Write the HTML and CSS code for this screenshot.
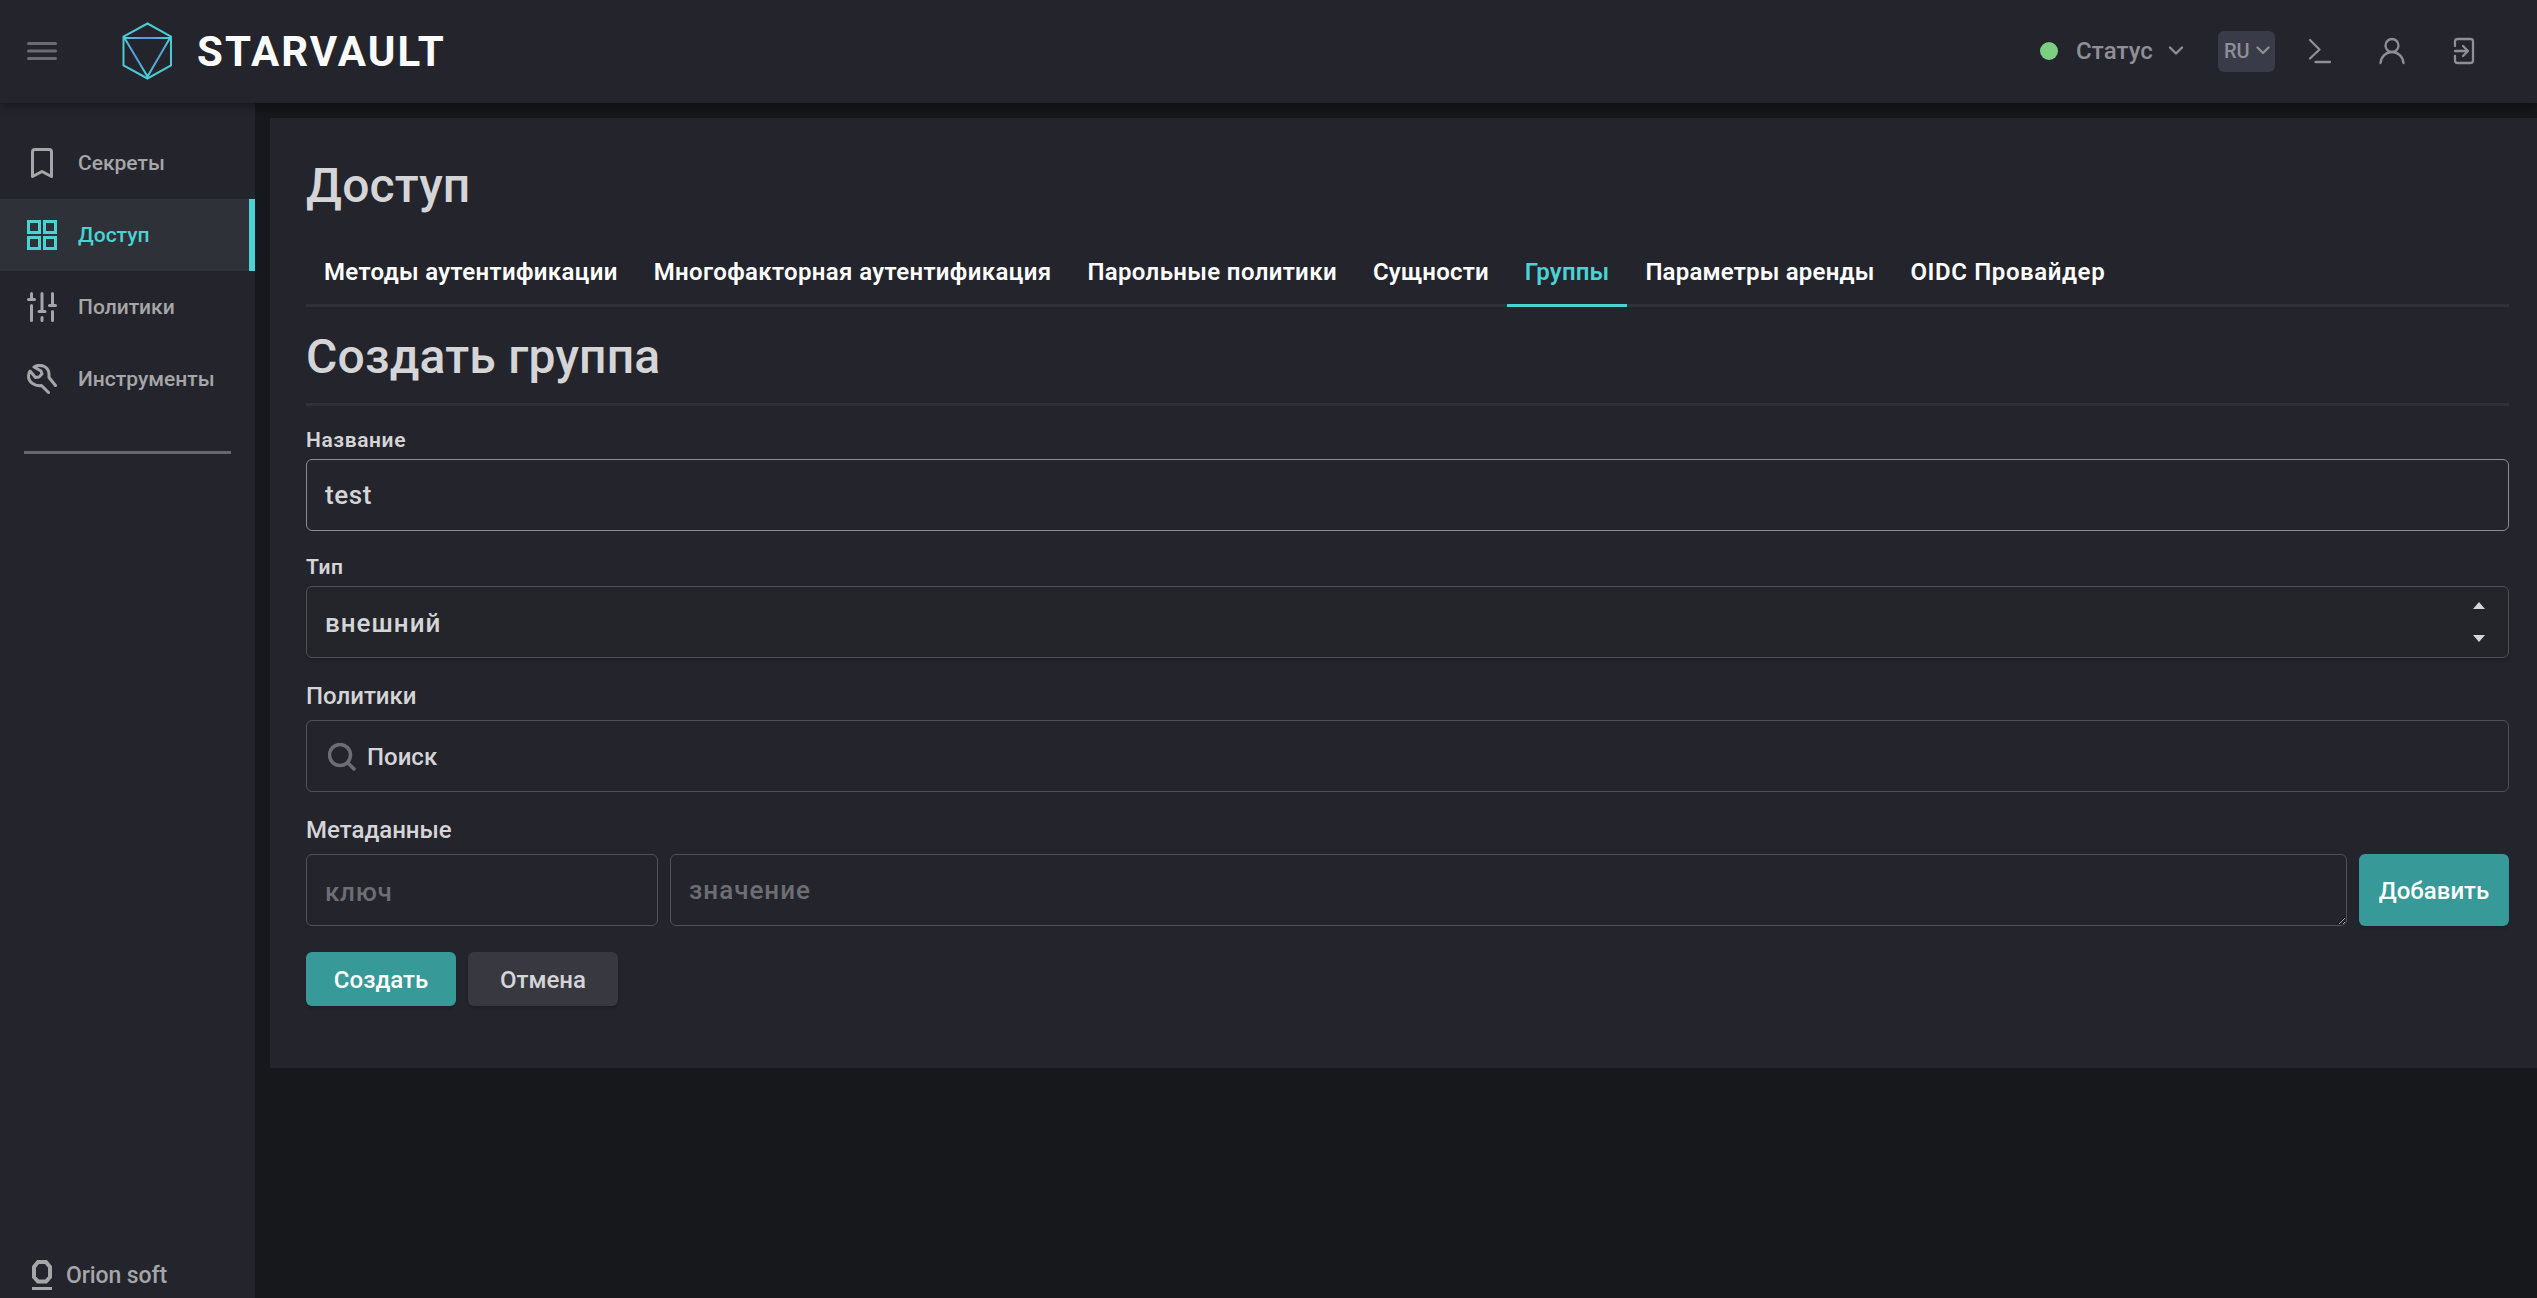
FILE: index.html
```html
<!DOCTYPE html>
<html lang="ru">
  <head>
    <meta charset="UTF-8" />
    <meta name="viewport" content="width=device-width, initial-scale=1.0" />
    <title>StarVault</title>
    <link rel="stylesheet" href="styles.css">
  </head>
  <body>
    <header class="header">
      <button class="menu-btn" aria-label="Меню">
        <svg width="30" height="18" viewBox="0 0 30 18" stroke="currentColor" stroke-width="3" stroke-linecap="round">
          <path d="M1.5 1.5h27M1.5 9h27M1.5 16.5h27" />
        </svg>
      </button>
      <a class="logo" href="#">
        <svg width="50" height="58" viewBox="0 0 50 58" fill="none" stroke-width="2">
          <defs>
            <radialGradient id="gem" gradientUnits="userSpaceOnUse" cx="25" cy="28" r="26">
              <stop offset="0.35" stop-color="#5590e0" />
              <stop offset="1" stop-color="#4bd2d2" />
            </radialGradient>
          </defs>
          <path d="M25.5 1.5 49 14.5V43.5L25.5 56.5 1.5 43.5V14.5z" stroke="#4bcad4" />
          <path d="M2.5 16H48L25.5 54.5z" stroke="url(#gem)" />
        </svg>
        <span class="logo-text">STARVAULT</span>
      </a>

      <div class="header-right">
        <div class="status">
          <span class="dot"></span>
          <span>Статус</span>
          <svg width="16" height="10" viewBox="0 0 16 10"><path d="M2 1.5l6 6 6-6" /></svg>
        </div>
        <div class="lang">
          <span>RU</span>
          <svg width="14" height="10" viewBox="0 0 14 10"><path d="M1.5 1.5L7 7l5.5-5.5" /></svg>
        </div>
        <div class="header-icons">
          <svg width="28" height="28" viewBox="0 0 28 28"><path d="M4 3l9.5 9.5L4 21.5M9.5 25H24" /></svg>
          <svg width="28" height="28" viewBox="0 0 28 28"><circle cx="14" cy="8.5" r="6.5" /><path d="M2.5 26C3 19.5 8 15 14 15s11 4.5 11.5 11" /></svg>
          <svg width="28" height="28" viewBox="0 0 28 28"><path d="M5 9V4.5Q5 2 7.5 2h13Q23 2 23 4.5v19q0 2.5-2.5 2.5h-13Q5 26 5 23.5V19M5 14h13M13 9l5 5-5 5" /></svg>
        </div>
      </div>
    </header>

    <div class="layout">
      <aside class="sidebar">
        <nav>
          <a class="nav-item" href="#">
            <svg width="30" height="30" viewBox="0 0 30 30"><path d="M5.5 28.5V4Q5.5 1.5 8 1.5h14q2.5 0 2.5 2.5v24.5L15 23.5z" /></svg>
            <span>Секреты</span>
          </a>
          <a class="nav-item active" href="#">
            <svg width="30" height="30" viewBox="0 0 30 30"><path d="M1.5 1.5h11v11h-11zM17.5 1.5h11v11h-11zM1.5 17.5h11v11h-11zM17.5 17.5h11v11h-11z" /></svg>
            <span>Доступ</span>
          </a>
          <a class="nav-item" href="#">
            <svg width="30" height="30" viewBox="0 0 30 30"><path d="M4.5 1.5v6M1.5 7.5h6M4.5 13.5v15M15 1.5v18M12 19.5h6M15 25.5v3M25.5 1.5v12M22.5 13.5h6M25.5 19.5v9" /></svg>
            <span>Политики</span>
          </a>
          <a class="nav-item" href="#">
            <svg width="30" height="30" viewBox="0 0 30 30"><path d="M7 3C13-.5 21.5 2 22 10v3.5l6.5 8M21.500 28.5l-7-7C8 22.5 1.5 18.5 1.5 12c0-2 .5-4 1.5-5l5.5 6.5 3.500-.5 3-3-1-3L7 3" /></svg>
            <span>Инструменты</span>
          </a>
        </nav>
        <hr class="nav-line" />
        <div class="vendor">
          <svg width="20" height="30" viewBox="0 0 20 30" fill="none" stroke="currentColor">
            <path d="M6 2h8l4 5v10l-4 4.500H6L2 17V7z" stroke-width="4" />
            <path d="M0 28.500h20" stroke-width="3" />
          </svg>
          <span>Orion soft</span>
        </div>
      </aside>

      <main class="panel">
        <h1>Доступ</h1>
        <nav class="tabs">
          <a href="#">Методы аутентификации</a>
          <a href="#">Многофакторная аутентификация</a>
          <a href="#">Парольные политики</a>
          <a class="narrow" href="#">Сущности</a>
          <a class="narrow active" href="#">Группы</a>
          <a class="narrow" href="#">Параметры аренды</a>
          <a class="wide" href="#">OIDC Провайдер</a>
        </nav>
        <h2>Создать группа</h2>

        <form>
          <div class="field">
            <label for="name">Название</label>
            <input class="control name" id="name" type="text" value="test" />
          </div>
          <div class="field">
            <label for="type">Тип</label>
            <div class="select">
              <select class="control" id="type">
                <option>внешний</option>
              </select>
              <svg class="arrows" width="12" height="40" viewBox="0 0 12 40"><path d="M0 7l6-7 6 7zM0 33h12l-6 7z" /></svg>
            </div>
          </div>
          <div class="field">
            <div class="title">Политики</div>
            <div class="control search">
              <svg width="28" height="28" viewBox="0 0 28 28"><circle cx="12" cy="12" r="10.5" /><path d="M20 20l6 6" /></svg>
              <span>Поиск</span>
            </div>
          </div>
          <div class="field">
            <div class="title">Метаданные</div>
            <div class="meta">
              <input class="control key" type="text" placeholder="ключ" />
              <textarea class="control value" rows="1" placeholder="значение"></textarea>
              <button class="btn primary" type="button">Добавить</button>
            </div>
          </div>
          <div class="actions">
            <button class="btn primary" type="button">Создать</button>
            <button class="btn" type="button">Отмена</button>
          </div>
        </form>
      </main>
    </div>
  </body>
</html>
```
FILE: styles.css
```css
* {
  box-sizing: border-box;
}
body {
  margin: 0;
  height: 100vh;
  display: flex;
  flex-direction: column;
  overflow: hidden;
  background: #17181c;
  color: #d5d5d8;
  font-family: Roboto, "Noto Sans", sans-serif;
  font-weight: 500;
}
a {
  color: inherit;
  text-decoration: none;
}

/* header */
.header {
  position: relative;
  z-index: 1;
  flex: none;
  height: 103px;
  padding: 0 59px 1px 27px;
  display: flex;
  align-items: center;
  background: #24242c;
  box-shadow: 0 3px 9px rgba(0, 0, 0, 0.4);
}
.menu-btn {
  display: flex;
  padding: 0;
  border: none;
  background: none;
  color: #6b6b71;
}
.logo {
  display: flex;
  align-items: center;
  gap: 25px;
  margin-left: 65px;
}
.logo-text {
  color: #fbfbfb;
  font-size: 42px;
  font-weight: 700;
  letter-spacing: 2.1px;
}
.header-right {
  margin-left: auto;
  display: flex;
  align-items: center;
  color: #8f8f97;
}
.header-right svg {
  fill: none;
  stroke: currentColor;
  stroke-width: 2.3;
  stroke-linecap: round;
  stroke-linejoin: round;
}
.status {
  display: flex;
  align-items: center;
  font-size: 24px;
  letter-spacing: 0.1px;
}
.dot {
  width: 18px;
  height: 18px;
  margin-right: 18px;
  border-radius: 50%;
  background: #7ccf82;
}
.status svg {
  margin-left: 15px;
}
.lang {
  display: flex;
  align-items: center;
  justify-content: space-between;
  width: 57px;
  height: 41px;
  margin: 0 31px 0 34px;
  padding: 0 5px 0 6px;
  border-radius: 6px;
  background: #3a3b48;
  font-size: 20px;
}
.header-icons {
  display: flex;
  gap: 44px;
}

/* sidebar */
.layout {
  flex: 1;
  display: flex;
  align-items: flex-start;
}
.sidebar {
  flex: none;
  align-self: stretch;
  width: 255px;
  padding: 24px 0 8px;
  display: flex;
  flex-direction: column;
  background: #24242c;
  color: #a6a6a8;
}
.nav-item {
  display: flex;
  align-items: center;
  gap: 21px;
  height: 72px;
  padding-left: 27px;
  font-size: 21px;
}
.nav-item svg {
  fill: none;
  stroke: currentColor;
  stroke-width: 3;
  stroke-linecap: round;
  stroke-linejoin: round;
}
.nav-item.active {
  background: #2f3138;
  border-right: 6px solid #4bd2d2;
  color: #4bd2d2;
}
.nav-item.active svg {
  stroke-linejoin: miter;
}
.nav-line {
  width: 207px;
  height: 3px;
  margin: 36px 24px 0;
  border: none;
  background: #67676d;
}
.vendor {
  margin-top: auto;
  padding-left: 32px;
  display: flex;
  align-items: center;
  gap: 14px;
  font-size: 23px;
  letter-spacing: -0.1px;
}

/* content */
.panel {
  flex: 1;
  margin: 15px 0 0 15px;
  padding: 38px 28px 62px 36px;
  background: #24242c;
}
h1,
h2 {
  margin: 0;
  font-size: 48px;
  line-height: 60px;
  font-weight: 500;
  letter-spacing: 0.2px;
}
h2 {
  padding: 20px 0 16px;
  border-bottom: 3px solid #303039;
}
.tabs {
  display: flex;
  margin-top: 24px;
  border-bottom: 3px solid #303039;
}
.tabs a {
  height: 67px;
  margin-bottom: -3px;
  padding: 0 18px;
  border-bottom: 3px solid transparent;
  color: #fff;
  font-size: 24px;
  font-weight: 600;
  line-height: 64px;
  letter-spacing: 0.36px;
}
.tabs a.active {
  border-color: #4bd2d2;
  color: #4bd2d2;
}
.tabs a.narrow {
  letter-spacing: 0.2px;
}
.tabs a.wide {
  letter-spacing: 0.6px;
}

/* form */
.field {
  margin-top: 22px;
}
.field:first-child {
  margin-top: 20px;
}
label {
  display: block;
  margin-bottom: 5px;
  padding-top: 1px;
  font-size: 21px;
  line-height: 27px;
  font-weight: 600;
  letter-spacing: 0.6px;
}
.field:first-child label {
  padding-top: 0;
  line-height: 28px;
}
.title {
  margin-bottom: 8px;
  font-size: 24px;
  line-height: 32px;
}
.control {
  display: block;
  width: 100%;
  height: 72px;
  margin: 0;
  padding: 2px 18px 0;
  border: 1px solid #505055;
  border-radius: 6px;
  outline: none;
  background: #24242c;
  color: inherit;
  font: 500 26px Roboto, "Noto Sans", sans-serif;
  letter-spacing: 1px;
}
.control::placeholder {
  color: #6d6e73;
}
.name {
  padding-top: 0;
  border-color: #8b8b91;
  letter-spacing: 0.6px;
}
.select {
  position: relative;
}
.select .control {
  appearance: none;
  background: #24252b;
  box-shadow: 0 3px 3px rgba(0, 0, 0, 0.1);
}
.arrows {
  position: absolute;
  top: 16px;
  right: 24px;
  fill: #d5d5d8;
}
.search {
  display: flex;
  align-items: center;
  gap: 11px;
  padding: 1px 21px 0;
  font-size: 24px;
  letter-spacing: 0;
}
.search svg {
  fill: none;
  stroke: #6d6e73;
  stroke-width: 3.5;
  stroke-linecap: round;
}
.meta {
  display: flex;
  gap: 12px;
}
.key {
  flex: none;
  width: 352px;
  padding-top: 3px;
  letter-spacing: 0.7px;
}
.value {
  flex: 1;
  padding-top: 17px;
  line-height: 36px;
  resize: vertical;
}
.btn {
  min-width: 150px;
  height: 54px;
  padding: 2px 6px 0;
  border: none;
  border-radius: 6px;
  background: #383840;
  box-shadow: 0 3px 3px rgba(0, 0, 0, 0.12);
  color: #d5d5d8;
  font: 500 24px Roboto, "Noto Sans", sans-serif;
}
.btn.primary {
  background: #379998;
  color: #fff;
}
.meta .btn {
  height: 72px;
}
.actions {
  display: flex;
  gap: 12px;
  margin-top: 26px;
}
```
